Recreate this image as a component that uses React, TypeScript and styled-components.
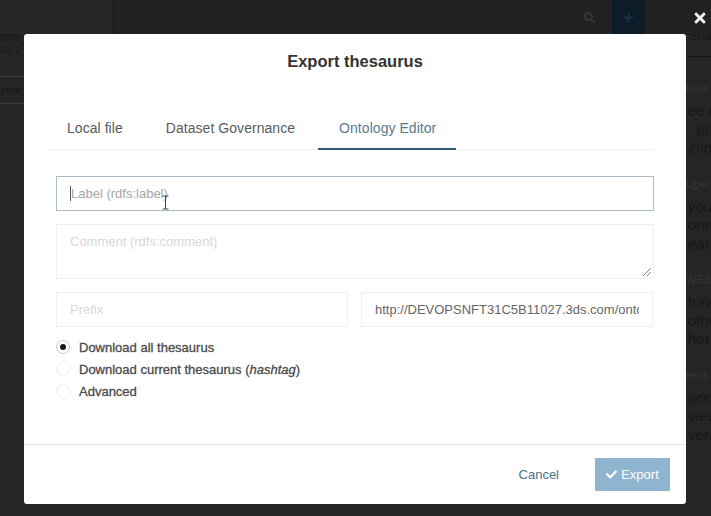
import React from 'react'
import styled, { createGlobalStyle } from 'styled-components'
import { FaCheck, FaPlus, FaSearch, FaTimes } from 'react-icons/fa'

const GlobalStyle = createGlobalStyle`
	html, body {
		margin: 0;
		padding: 0;
		height: 100%;
		overflow: hidden;
		background: #242424;
		font-family: "Liberation Sans", Arial, sans-serif;
	}
`

const Page = styled.div`
	position: relative;
	width: 711px;
	height: 516px;
	overflow: hidden;
	background: #252525;
	display: flex;
	flex-direction: column;
`

const TopBar = styled.div`
	height: 34px;
	flex: none;
	display: flex;
	background: #222222;
	padding-right: 66px;
`

const TopBarLeft = styled.div`
	width: 112px;
	background: #272727;
	border-right: 3px solid #1f1f1f;
`

const SearchButton = styled.div`
	width: 46px;
	margin-left: auto;
	display: flex;
	align-items: center;
	justify-content: center;
	color: #383838;
	font-size: 11px;
`

const AddButton = styled.div`
	width: 33px;
	display: flex;
	align-items: center;
	justify-content: center;
	background: #0c1c28;
	color: #173447;
	font-size: 11px;
`

const CloseIcon = styled.div`
	position: absolute;
	top: 10px;
	left: 692px;
	color: #f2f2f2;
	font-size: 16px;
	line-height: 16px;
`

const Columns = styled.div`
	flex: 1;
	display: flex;
	justify-content: space-between;
`

const LeftColumn = styled.div`
	width: 24px;
	overflow: hidden;
	color: #181818;
	white-space: nowrap;
`

const FromText = styled.div`
	font-size: 12px;
	line-height: 13px;
	margin-top: -3px;
`

const DateText = styled.div`
	font-size: 9px;
	line-height: 12px;
`

const YourRow = styled.div`
	margin-top: 20px;
	height: 26px;
	line-height: 26px;
	font-size: 11px;
	border-top: 1px solid #3a3a3a;
	border-bottom: 1px solid #3a3a3a;
`

const RightColumn = styled.div`
	width: 25px;
	overflow: hidden;
	white-space: pre;
`

const ShareTab = styled.div`
	height: 22px;
	font-size: 12px;
	line-height: 4px;
	padding-left: 4px;
	color: #181818;
	border-bottom: 1px solid #151515;
`

const Block = styled.div<{ $gap: number }>`
	margin-top: ${p => p.$gap}px;
`

const BlockTitle = styled.div`
	font-size: 11px;
	line-height: 12px;
	margin-bottom: 8px;
	color: #363636;
`

const BlockLine = styled.div`
	font-size: 15px;
	line-height: 18.5px;
	padding-left: 2px;
	color: #181818;
`

const Modal = styled.div`
	position: absolute;
	top: 34px;
	left: 24px;
	width: 662px;
	height: 470px;
	background: #ffffff;
	border-radius: 3px;
	display: flex;
	flex-direction: column;
`

const Title = styled.h2`
	margin: 0;
	padding-top: 17px;
	height: 36px;
	box-sizing: content-box;
	text-align: center;
	font-size: 16.5px;
	line-height: 20px;
	font-weight: 700;
	color: #333333;
`

const Tabs = styled.div`
	margin: 17px 32px 0 24px;
	height: 46px;
	display: flex;
	gap: 2px;
	box-shadow: inset 0 -1px 0 #f0f1f2;
`

const Tab = styled.div<{ $active?: boolean }>`
	height: 46px;
	box-sizing: border-box;
	padding: 4px 21px 0;
	display: flex;
	align-items: center;
	font-size: 14px;
	letter-spacing: 0.05px;
	color: ${p => (p.$active ? '#5a7a90' : '#5a5a5a')};
	border-bottom: 2px solid ${p => (p.$active ? '#2f5b75' : 'transparent')};
	&:first-child {
		padding-left: 19px;
		padding-right: 20px;
	}
	&:last-child {
		padding-right: 20px;
	}
`

const Form = styled.div`
	flex: 1;
	padding: 26px 32px 0;
	display: flex;
	flex-direction: column;
`

const FocusedField = styled.div`
	position: relative;
	height: 35px;
	box-sizing: border-box;
	border: 1px solid #a9bcc8;
	padding-left: 13px;
	display: flex;
	align-items: center;
`

const Caret = styled.span`
	width: 1px;
	height: 15px;
	background: #555555;
`

const FocusedPlaceholder = styled.span`
	font-size: 13px;
	color: #a6a6a6;
`

const Cursor = styled.svg`
	position: absolute;
	left: 105px;
	top: 18px;
`

const TextArea = styled.div`
	position: relative;
	margin-top: 13px;
	height: 55px;
	box-sizing: border-box;
	border: 1px solid #eeeff1;
	padding: 10px 13px;
	font-size: 13px;
	line-height: 14px;
	color: #d8d8d8;
`

const Grip = styled.svg`
	position: absolute;
	right: 1px;
	bottom: 1px;
`

const FieldRow = styled.div`
	margin-top: 13px;
	display: grid;
	grid-template-columns: 292px 292px;
	column-gap: 13px;
`

const Field = styled.div<{ $filled?: boolean }>`
	height: 35px;
	box-sizing: border-box;
	border: 1px solid #eeeff1;
	padding: 0 13px;
	display: flex;
	align-items: center;
	font-size: 13px;
	color: ${p => (p.$filled ? '#666666' : '#d8d8d8')};
`

const FieldValue = styled.span`
	flex: 1;
	overflow: hidden;
	white-space: nowrap;
`

const Options = styled.div`
	margin-top: 11px;
	display: flex;
	flex-direction: column;
	gap: 4px;
`

const Option = styled.div`
	height: 18px;
	display: flex;
	align-items: center;
	gap: 9px;
	font-size: 13px;
	color: #4a4a4a;
	-webkit-text-stroke: 0.3px #4a4a4a;
`

const Radio = styled.span<{ $checked?: boolean }>`
	width: 14px;
	height: 14px;
	box-sizing: border-box;
	border-radius: 50%;
	border: 1px solid ${p => (p.$checked ? '#c9ccd0' : '#eceef0')};
	display: flex;
	align-items: center;
	justify-content: center;
	&::after {
		content: '';
		display: ${p => (p.$checked ? 'block' : 'none')};
		width: 6px;
		height: 6px;
		border-radius: 50%;
		background: #1c1c24;
	}
`

const Footer = styled.div`
	height: 60px;
	box-sizing: border-box;
	flex: none;
	border-top: 1px solid #e6e7e8;
	display: flex;
	align-items: center;
	justify-content: flex-end;
	gap: 36px;
	padding: 0 16px 0 0;
`

const CancelLink = styled.span`
	font-size: 13px;
	color: #4d7187;
`

const ExportButton = styled.div`
	width: 75px;
	height: 33px;
	background: #8fb4d0;
	color: #ffffff;
	display: flex;
	align-items: center;
	justify-content: center;
	gap: 4px;
	font-size: 13px;
`

const backgroundBlocks = [
	{ gap: 25, title: 'lishe', lines: ['ee t', '  pre', 'imm'] },
	{ gap: 20, title: 'Uper', lines: ['you', 'one', 'eard'] },
	{ gap: 20, title: 'WES', lines: ['have', 'othe', 'her'] },
	{ gap: 20, title: 'kera', lines: ['acci', 'view', 'vera'] },
]

const App = () => {
	return (
		<Page>
			<GlobalStyle />
			<TopBar>
				<TopBarLeft />
				<SearchButton><FaSearch /></SearchButton>
				<AddButton><FaPlus /></AddButton>
			</TopBar>
			<CloseIcon><FaTimes /></CloseIcon>
			<Columns>
				<LeftColumn>
					<FromText>rom</FromText>
					<DateText>23, 2</DateText>
					<YourRow>your</YourRow>
				</LeftColumn>
				<RightColumn>
					<ShareTab>Shari</ShareTab>
					{backgroundBlocks.map(block => (
						<Block key={block.title} $gap={block.gap}>
							<BlockTitle>{block.title}</BlockTitle>
							{block.lines.map(line => <BlockLine key={line}>{line}</BlockLine>)}
						</Block>
					))}
				</RightColumn>
			</Columns>
			<Modal>
				<Title>Export thesaurus</Title>
				<Tabs>
					<Tab>Local file</Tab>
					<Tab>Dataset Governance</Tab>
					<Tab $active>Ontology Editor</Tab>
				</Tabs>
				<Form>
					<FocusedField>
						<Caret />
						<FocusedPlaceholder>Label (rdfs:label)</FocusedPlaceholder>
						<Cursor width="7" height="15" viewBox="0 0 7 15">
							<path d="M0.5 1H6.5M3.5 1V14M0.5 14H6.5" stroke="#444" strokeWidth="1" fill="none" />
						</Cursor>
					</FocusedField>
					<TextArea>
						Comment (rdfs:comment)
						<Grip width="10" height="10" viewBox="0 0 10 10">
							<path d="M9 1L1 9M9 5L5 9" stroke="#888" strokeWidth="1" fill="none" />
						</Grip>
					</TextArea>
					<FieldRow>
						<Field>Prefix</Field>
						<Field $filled><FieldValue>http://DEVOPSNFT31C5B11027.3ds.com/ontology</FieldValue></Field>
					</FieldRow>
					<Options>
						<Option><Radio $checked />Download all thesaurus</Option>
						<Option><Radio /><span>Download current thesaurus (<i>hashtag</i>)</span></Option>
						<Option><Radio />Advanced</Option>
					</Options>
				</Form>
				<Footer>
					<CancelLink>Cancel</CancelLink>
					<ExportButton><FaCheck size={11} />Export</ExportButton>
				</Footer>
			</Modal>
		</Page>
	)
}

export default App
